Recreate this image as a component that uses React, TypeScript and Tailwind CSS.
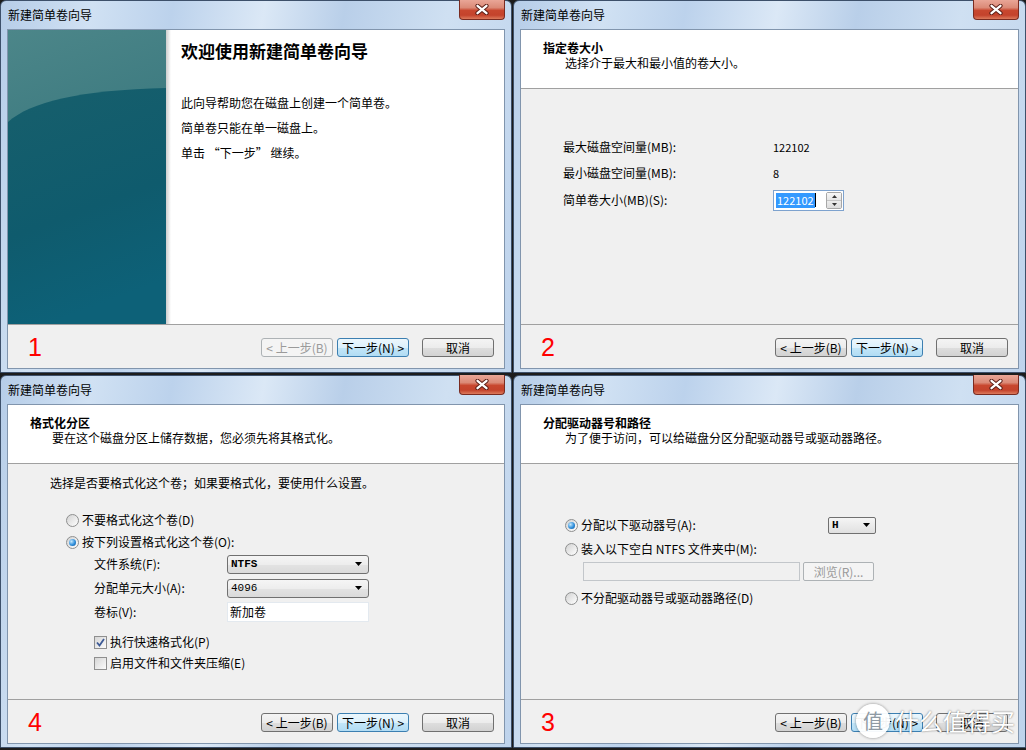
import React from "react";

const btnBase =
  "flex h-[19px] w-[72px] items-center justify-center rounded-[3px] border text-[12px] leading-[16px]";

const Btn = ({ kind = "normal", children }: { kind?: "normal" | "default" | "disabled"; children: React.ReactNode }) => {
  const look =
    kind === "default"
      ? "border-[#3c7fb1] bg-[linear-gradient(#ecf7fd_0%,#dcf1fc_50%,#c3e6f8_51%,#b1dcf4_100%)] text-black"
      : kind === "disabled"
      ? "border-[#adb2b5] bg-[#f4f4f4] text-[#9a9a9a]"
      : "border-[#707070] bg-[linear-gradient(#f4f4f4_0%,#ececec_50%,#dedede_51%,#d2d2d2_100%)] text-black";
  return <div className={`${btnBase} ${look}`}>{children}</div>;
};

const CloseBtn = () => (
  <div className="-mt-px flex h-[20px] w-[46px] items-center justify-center rounded-b-[4px] border border-t-0 border-[#7a2b20] bg-[linear-gradient(#e9a697_0%,#db8a77_40%,#c8472f_55%,#c4432c_80%,#dc7a5c_100%)]">
    <svg width="14" height="11" viewBox="0 0 14 11">
      <path d="M2.5 1.8 L11.5 9.2 M11.5 1.8 L2.5 9.2" stroke="#5a1e16" strokeWidth="4.2" strokeLinecap="round" />
      <path d="M2.5 1.8 L11.5 9.2 M11.5 1.8 L2.5 9.2" stroke="#ffffff" strokeWidth="2.3" strokeLinecap="round" />
    </svg>
  </div>
);

const Radio = ({ checked = false }: { checked?: boolean }) => (
  <span className="flex h-[13px] w-[13px] shrink-0 items-center justify-center rounded-full border border-[#8e8f8f] bg-[linear-gradient(135deg,#d2d2d2,#ffffff)]">
    {checked && (
      <span className="h-[7px] w-[7px] rounded-full bg-[radial-gradient(circle_at_35%_35%,#c6e8fb,#2f8fdc_55%,#0e4f8f)]" />
    )}
  </span>
);

const Check = ({ checked = false }: { checked?: boolean }) => (
  <span className="flex h-[13px] w-[13px] shrink-0 items-center justify-center border border-[#8f8f8f] bg-[linear-gradient(135deg,#d6d6d6,#fbfbfb)]">
    {checked && (
      <svg width="9" height="9" viewBox="0 0 9 9">
        <path d="M1 4.5 L3.5 7.5 L8 1" fill="none" stroke="#3d5a96" strokeWidth="1.8" />
      </svg>
    )}
  </span>
);

const Arrow = () => (
  <svg width="7" height="4" viewBox="0 0 7 4">
    <path d="M0 0 H7 L3.5 4 Z" fill="#000" />
  </svg>
);

const Combo = ({ value, bold = false }: { value: string; bold?: boolean }) => (
  <div
    className={`flex h-[19px] w-[142px] items-center justify-between rounded-[3px] border border-[#707070] bg-[linear-gradient(#f5f5f5_0%,#ededed_50%,#e3e3e3_51%,#dadada_100%)] pl-[3px] pr-[6px] font-['Liberation_Mono',monospace] text-[11px] ${
      bold ? "font-bold" : ""
    }`}
  >
    <span>{value}</span>
    <Arrow />
  </div>
);

const Header = ({ title, sub }: { title: string; sub: string }) => (
  <div className="h-[59px] shrink-0 border-b border-[#a0a0a0] bg-white pl-[22px] pt-[10px]">
    <div className="text-[12px] font-bold leading-[15px]">{title}</div>
    <div className="pl-[22px] text-[12px] leading-[15px]">{sub}</div>
  </div>
);

const Footer = ({ num, prevOff = false }: { num: string; prevOff?: boolean }) => (
  <div className="flex h-[44px] shrink-0 items-start justify-between border-t border-[#a0a0a0] bg-[#f0f0f0]">
    <span className="ml-[20px] mt-[10px] font-['Liberation_Sans',sans-serif] text-[25px] leading-none text-[#ff0000]">
      {num}
    </span>
    <div className="mr-[10px] mt-[13px] flex">
      <Btn kind={prevOff ? "disabled" : "normal"}>&lt; 上一步(B)</Btn>
      <div className="ml-[4px]">
        <Btn kind="default">下一步(N) &gt;</Btn>
      </div>
      <div className="ml-[13px]">
        <Btn>取消</Btn>
      </div>
    </div>
  </div>
);

const Win = ({ children, overlay }: { children: React.ReactNode; overlay?: React.ReactNode }) => (
  <div className="relative flex h-[373px] flex-col rounded-t-[6px] border border-[#3d506a] bg-[linear-gradient(100deg,#b6cde8_0%,#d0e1f3_16%,#bcd2ec_30%,#dbe8f6_46%,#b9cfe9_60%,#cfe0f2_78%,#bed3ec_100%)] px-[6px] pb-[3px]">
    <div className="flex h-[28px] shrink-0 items-start justify-between">
      <span className="pl-[1px] pt-[6px] text-[12px] leading-[16px] text-black">新建简单卷向导</span>
      <CloseBtn />
    </div>
    <div className="flex flex-1 flex-col border border-[#8195ad] bg-[#f0f0f0]">{children}</div>
    {overlay}
  </div>
);

const Teal = () => (
  <svg width="158" height="294" viewBox="0 0 158 294" className="block shrink-0">
    <defs>
      <linearGradient id="tealTop" x1="0" y1="0" x2="0.2" y2="1">
        <stop offset="0" stopColor="#4c8689" />
        <stop offset="1" stopColor="#2b6d76" />
      </linearGradient>
      <linearGradient id="tealBottom" x1="0" y1="0" x2="0.25" y2="1">
        <stop offset="0" stopColor="#175f6c" />
        <stop offset="0.6" stopColor="#0f5b6d" />
        <stop offset="1" stopColor="#0d6178" />
      </linearGradient>
    </defs>
    <rect width="158" height="294" fill="url(#tealTop)" />
    <path d="M0 92 C22 72 72 60 158 58 V294 H0 Z" fill="url(#tealBottom)" />
  </svg>
);

const Welcome = () => (
  <Win>
    <div className="flex flex-1 bg-white">
      <Teal />
      <div className="w-[5px] bg-gradient-to-r from-[#cdcdcd] to-white" />
      <div className="pl-[10px] pt-[10px]">
        <div className="text-[17px] font-bold leading-[22px]">欢迎使用新建简单卷向导</div>
        <div className="mt-[28px] leading-[25px]">
          <p>此向导帮助您在磁盘上创建一个简单卷。</p>
          <p>简单卷只能在单一磁盘上。</p>
          <p>单击 “下一步” 继续。</p>
        </div>
      </div>
    </div>
    <Footer num="1" prevOff />
  </Win>
);

const SizeStep = () => (
  <Win>
    <Header title="指定卷大小" sub="选择介于最大和最小值的卷大小。" />
    <div className="flex-1 pl-[42px] pt-[45px]">
      <div className="grid grid-cols-[210px_auto] items-center">
        <div className="flex h-[26px] items-center">最大磁盘空间量(MB):</div>
        <div className="text-[11px]">122102</div>
        <div className="flex h-[26px] items-center">最小磁盘空间量(MB):</div>
        <div className="text-[11px]">8</div>
        <div className="flex h-[28px] items-center">简单卷大小(MB)(S):</div>
        <div className="flex h-[21px] w-[71px] items-center border border-[#7da2ce] bg-white pr-[1px]">
          <div className="flex flex-1 items-center pl-[2px]">
            <span className="bg-[#3399ff] px-[1px] text-[11px] leading-[15px] text-white">122102</span>
            <span className="h-[14px] w-px bg-black" />
          </div>
          <div className="flex h-[17px] w-[16px] flex-col rounded-[2px] border border-[#a7a7a7]">
            <div className="flex flex-1 items-center justify-center border-b border-[#c4c4c4] bg-[linear-gradient(#f7f7f7,#e6e6e6)]">
              <svg width="5" height="3" viewBox="0 0 5 3"><path d="M0 3 H5 L2.5 0 Z" fill="#333" /></svg>
            </div>
            <div className="flex flex-1 items-center justify-center bg-[linear-gradient(#ececec,#dcdcdc)]">
              <svg width="5" height="3" viewBox="0 0 5 3"><path d="M0 0 H5 L2.5 3 Z" fill="#333" /></svg>
            </div>
          </div>
        </div>
      </div>
    </div>
    <Footer num="2" />
  </Win>
);

const FormatStep = () => (
  <Win>
    <Header title="格式化分区" sub="要在这个磁盘分区上储存数据，您必须先将其格式化。" />
    <div className="flex-1 pl-[42px] pt-[11px]">
      <div className="leading-[16px]">选择是否要格式化这个卷；如果要格式化，要使用什么设置。</div>
      <div className="ml-[16px] mt-[21px] flex h-[16px] items-center gap-[3px]">
        <Radio />
        <span>不要格式化这个卷(D)</span>
      </div>
      <div className="ml-[16px] mt-[6px] flex h-[16px] items-center gap-[3px]">
        <Radio checked />
        <span>按下列设置格式化这个卷(O):</span>
      </div>
      <div className="ml-[44px] mt-[2px] grid grid-cols-[133px_142px]">
        <div className="flex h-[24px] items-center">文件系统(F):</div>
        <div className="flex h-[24px] items-center">
          <Combo value="NTFS" bold />
        </div>
        <div className="flex h-[24px] items-center">分配单元大小(A):</div>
        <div className="flex h-[24px] items-center">
          <Combo value="4096" />
        </div>
        <div className="flex h-[24px] items-center">卷标(V):</div>
        <div className="flex h-[24px] items-center">
          <div className="flex h-[20px] w-[142px] items-center border border-[#e3e9ef] bg-white pl-[2px]">新加卷</div>
        </div>
      </div>
      <div className="ml-[44px] mt-[10px] flex h-[16px] items-center gap-[3px]">
        <Check checked />
        <span>执行快速格式化(P)</span>
      </div>
      <div className="ml-[44px] mt-[5px] flex h-[16px] items-center gap-[3px]">
        <Check />
        <span>启用文件和文件夹压缩(E)</span>
      </div>
    </div>
    <Footer num="4" />
  </Win>
);

const Watermark = () => (
  <div className="pointer-events-none absolute bottom-[9px] right-[10px] flex items-center gap-[5px]">
    <div className="flex h-[34px] w-[34px] items-center justify-center rounded-full bg-white/95 text-[20px] leading-none text-[#8f9aa3] shadow-[0_0_3px_rgba(0,0,0,0.45)]">
      值
    </div>
    <span className="text-[24px] leading-none text-white [text-shadow:0_0_2px_rgba(0,0,0,0.6)]">什么值得买</span>
  </div>
);

const LetterStep = () => (
  <Win overlay={<Watermark />}>
    <Header title="分配驱动器号和路径" sub="为了便于访问，可以给磁盘分区分配驱动器号或驱动器路径。" />
    <div className="flex-1 pl-[44px] pt-[52px]">
      <div className="grid h-[18px] grid-cols-[263px_48px] items-center">
        <div className="flex items-center gap-[3px]">
          <Radio checked />
          <span>分配以下驱动器号(A):</span>
        </div>
        <div className="flex h-[17px] items-center justify-between rounded-[2px] border border-[#707070] bg-[linear-gradient(#f5f5f5,#e0e0e0)] pl-[3px] pr-[5px] font-['Liberation_Mono',monospace] text-[11px] font-bold">
          <span>H</span>
          <Arrow />
        </div>
      </div>
      <div className="mt-[7px] flex h-[16px] items-center gap-[3px]">
        <Radio />
        <span>装入以下空白 NTFS 文件夹中(M):</span>
      </div>
      <div className="ml-[18px] mt-[5px] flex h-[19px] gap-[3px]">
        <div className="w-[217px] border border-[#c2c6ca] bg-[#f0f0f0]" />
        <div className="flex w-[71px] items-center justify-center rounded-[2px] border border-[#adb2b5] bg-[#f4f4f4] text-[#9a9a9a]">
          浏览(R)...
        </div>
      </div>
      <div className="mt-[9px] flex h-[16px] items-center gap-[3px]">
        <Radio />
        <span>不分配驱动器号或驱动器路径(D)</span>
      </div>
    </div>
    <Footer num="3" />
  </Win>
);

export default function App() {
  return (
    <div className="grid h-[750px] w-[1026px] grid-cols-[512px_513px] grid-rows-[373px_373px] gap-x-px gap-y-[2px] overflow-hidden bg-[#1c1c1c] font-['Noto_Sans_CJK_SC','Liberation_Sans',sans-serif] text-[12px] text-black">
      <Welcome />
      <SizeStep />
      <FormatStep />
      <LetterStep />
    </div>
  );
}
